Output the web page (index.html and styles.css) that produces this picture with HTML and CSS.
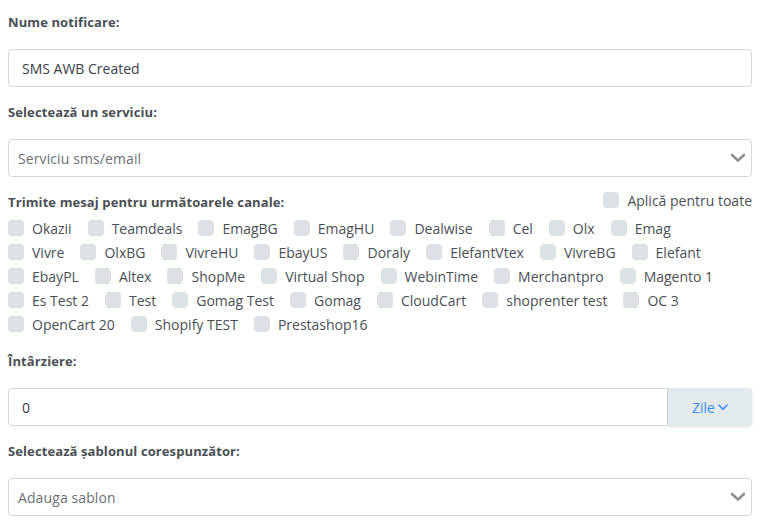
FILE: index.html
```html
<!DOCTYPE html>
<html lang="ro">
<head>
<meta charset="utf-8">
<link rel="stylesheet" href="styles.css">
</head>
<body>
<div class="form">
  <div class="group">
    <label class="lbl">Nume notificare:</label>
    <div class="input">SMS AWB Created</div>
  </div>
  <div class="group">
    <label class="lbl">Selectează un serviciu:</label>
    <div class="select"><span>Serviciu sms/email</span>
      <svg class="chev" width="16" height="10" viewBox="0 0 16 10"><path d="M2 2 L8 7.5 L14 2" fill="none" stroke="#8f8f8f" stroke-width="2.6" stroke-linecap="round" stroke-linejoin="round"/></svg>
    </div>
  </div>
  <div class="group channels">
    <div class="chan-head">
      <label class="lbl">Trimite mesaj pentru următoarele canale:</label>
      <div class="cb all"><span class="box"></span><span>Aplică pentru toate</span></div>
    </div>
    <div class="cb-list">
      <div class="cb"><span class="box"></span><span>Okazii</span></div>
      <div class="cb"><span class="box"></span><span>Teamdeals</span></div>
      <div class="cb"><span class="box"></span><span>EmagBG</span></div>
      <div class="cb"><span class="box"></span><span>EmagHU</span></div>
      <div class="cb"><span class="box"></span><span>Dealwise</span></div>
      <div class="cb"><span class="box"></span><span>Cel</span></div>
      <div class="cb"><span class="box"></span><span>Olx</span></div>
      <div class="cb"><span class="box"></span><span>Emag</span></div>
      <div class="cb"><span class="box"></span><span>Vivre</span></div>
      <div class="cb"><span class="box"></span><span>OlxBG</span></div>
      <div class="cb"><span class="box"></span><span>VivreHU</span></div>
      <div class="cb"><span class="box"></span><span>EbayUS</span></div>
      <div class="cb"><span class="box"></span><span>Doraly</span></div>
      <div class="cb"><span class="box"></span><span>ElefantVtex</span></div>
      <div class="cb"><span class="box"></span><span>VivreBG</span></div>
      <div class="cb"><span class="box"></span><span>Elefant</span></div>
      <div class="cb"><span class="box"></span><span>EbayPL</span></div>
      <div class="cb"><span class="box"></span><span>Altex</span></div>
      <div class="cb"><span class="box"></span><span>ShopMe</span></div>
      <div class="cb"><span class="box"></span><span>Virtual Shop</span></div>
      <div class="cb"><span class="box"></span><span>WebinTime</span></div>
      <div class="cb"><span class="box"></span><span>Merchantpro</span></div>
      <div class="cb"><span class="box"></span><span>Magento 1</span></div>
      <div class="cb"><span class="box"></span><span>Es Test 2</span></div>
      <div class="cb"><span class="box"></span><span>Test</span></div>
      <div class="cb"><span class="box"></span><span>Gomag Test</span></div>
      <div class="cb"><span class="box"></span><span>Gomag</span></div>
      <div class="cb"><span class="box"></span><span>CloudCart</span></div>
      <div class="cb"><span class="box"></span><span>shoprenter test</span></div>
      <div class="cb"><span class="box"></span><span>OC 3</span></div>
      <div class="cb"><span class="box"></span><span>OpenCart 20</span></div>
      <div class="cb"><span class="box"></span><span>Shopify TEST</span></div>
      <div class="cb"><span class="box"></span><span>Prestashop16</span></div>
    </div>
  </div>
  <div class="group">
    <label class="lbl">Întârziere:</label>
    <div class="input-group">
      <div class="input grow">0</div>
      <div class="addon">Zile
        <svg width="10" height="7" viewBox="0 0 10 7"><path d="M1 1.2 L5 5.2 L9 1.2" fill="none" stroke="#3d8af7" stroke-width="1.6" stroke-linecap="round" stroke-linejoin="round"/></svg>
      </div>
    </div>
  </div>
  <div class="group">
    <label class="lbl">Selectează șablonul corespunzător:</label>
    <div class="select"><span>Adauga sablon</span>
      <svg class="chev" width="16" height="10" viewBox="0 0 16 10"><path d="M2 2 L8 7.5 L14 2" fill="none" stroke="#8f8f8f" stroke-width="2.6" stroke-linecap="round" stroke-linejoin="round"/></svg>
    </div>
  </div>
</div>
</body>
</html>
```
FILE: styles.css
```css
* { box-sizing: border-box; }
body {
  margin: 0;
  padding: 12px 12px 0 8px;
  background: #fff;
  font-family: "Open Sans", "Noto Sans", sans-serif;
  font-size: 14px;
  color: #495057;
}
.form { width: 744px; }
.group { margin-bottom: 15px; }
.lbl {
  display: block;
  font-size: 13px;
  font-weight: 700;
  letter-spacing: 0.1px;
  line-height: 20px;
  margin-bottom: 17px;
  color: #4a4f55;
}
.input, .select {
  height: 38px;
  border: 1px solid #d3d6d9;
  border-radius: 4px;
  display: flex;
  align-items: center;
  padding-left: 13px;
  color: #3a3e44;
}
.select {
  padding-left: 9px;
  padding-right: 5px;
  justify-content: space-between;
  color: #6c7075;
  letter-spacing: 0.1px;
}
.chev { display: block; }
.channels { margin-bottom: 15px; }
.chan-head {
  display: flex;
  justify-content: space-between;
  align-items: flex-start;
}
.chan-head .lbl { margin-bottom: 4px; }
.cb-list {
  display: flex;
  flex-wrap: wrap;
}
.cb {
  display: flex;
  align-items: center;
  height: 24px;
  margin-right: 16px;
  color: #4a4f55;
}
.box {
  width: 16px;
  height: 16px;
  border-radius: 4px;
  background: #dde1e5;
  margin-right: 8px;
  flex: none;
}
.cb.all { margin-right: 0; height: 20px; margin-top: -2px; }
.input-group { display: flex; }
.input.grow {
  flex: 1;
  border-radius: 4px 0 0 4px;
}
.addon {
  width: 84px;
  height: 38px;
  background: #e3eaeb;
  border-radius: 0 4px 4px 0;
  box-shadow: 0 1px 3px rgba(0,0,0,0.12);
  color: #3d8af7;
  display: flex;
  align-items: center;
  justify-content: center;
  gap: 3px;
}
```
